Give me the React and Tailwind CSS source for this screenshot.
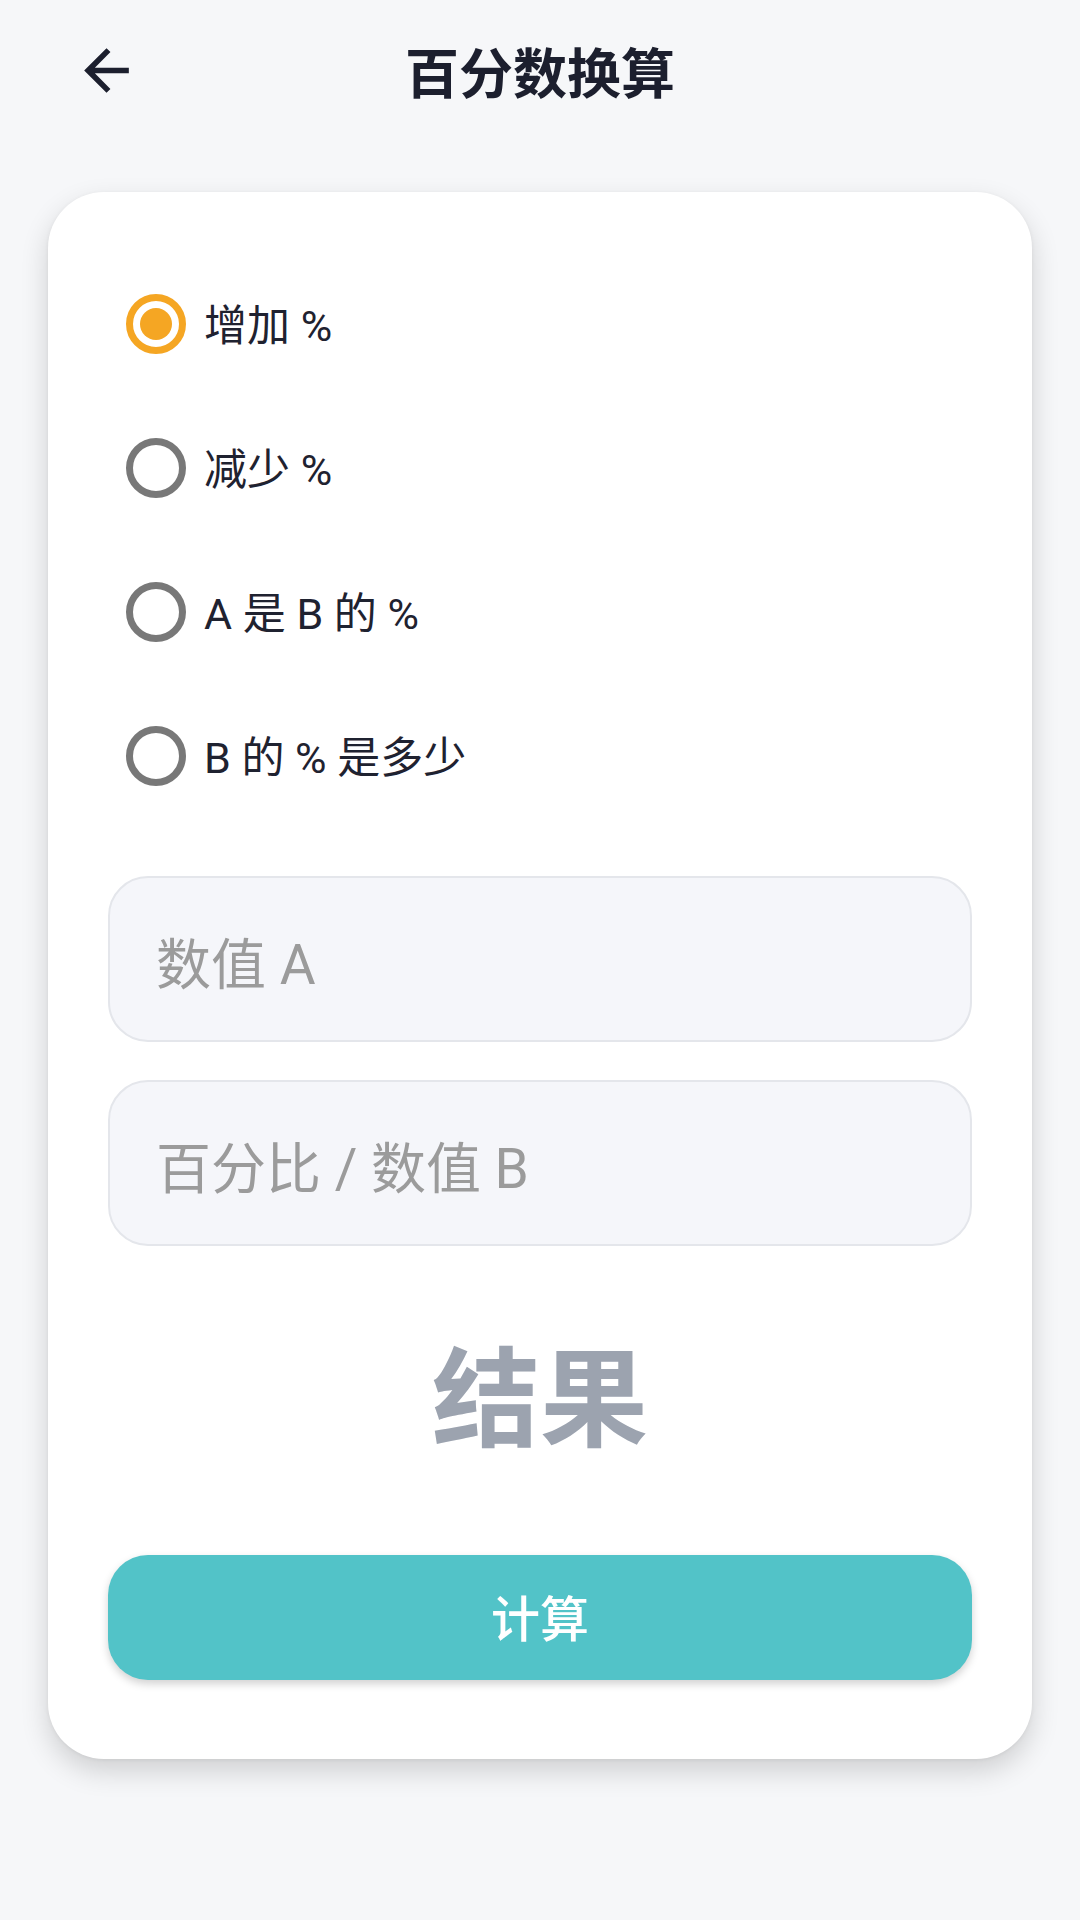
import React from "react";
import { MdArrowBack } from "react-icons/md";

const options = ["增加 %", "减少 %", "A 是 B 的 %", "B 的 % 是多少"];

function Radio({ selected }) {
  return selected ? (
    <div className="w-[60px] h-[60px] rounded-full border-[7px] border-[#f5a623] flex items-center justify-center shrink-0">
      <div className="w-[32px] h-[32px] rounded-full bg-[#f5a623]" />
    </div>
  ) : (
    <div className="w-[60px] h-[60px] rounded-full border-[7px] border-[#787878] shrink-0" />
  );
}

export default function App() {
  return (
    <div
      className="w-[1080px] min-h-[1920px] bg-[#f6f7f9]"
      style={{ fontFamily: 'Roboto, "Noto Sans CJK SC", sans-serif' }}
    >
      <header className="h-[140px] grid grid-cols-[213px_1fr_213px] items-center">
        <div className="flex items-center justify-center">
          <MdArrowBack size={67} color="#1c1f2e" />
        </div>
        <h1 className="pt-[12px] text-center text-[54px] leading-none font-bold text-[#1c1f2e]">
          百分数换算
        </h1>
        <div />
      </header>

      <main className="mx-[48px] mt-[52px] rounded-[56px] bg-white pt-[60px] pb-[79px] shadow-[0_12px_28px_rgba(0,0,0,0.16),0_1px_4px_rgba(0,0,0,0.06)]">
        <div className="flex flex-col">
          {options.map((o, i) => (
            <div key={o} className="h-[144px] flex items-center pl-[78px] gap-[18px]">
              <Radio selected={i === 0} />
              <span className="pt-[5px] text-[43px] leading-none text-[#1f2230]">{o}</span>
            </div>
          ))}
        </div>

        <div className="px-[60px] mt-[48px] flex flex-col gap-[38px]">
          <input
            className="h-[166px] w-full rounded-[40px] border-2 border-[#e4e6eb] bg-[#f5f6fa] pl-[46px] pt-[12px] text-[55px] leading-none text-[#1f2230] placeholder:text-[#9b9b9b] outline-none"
            placeholder="数值 A"
          />
          <input
            className="h-[166px] w-full rounded-[40px] border-2 border-[#e4e6eb] bg-[#f5f6fa] pl-[46px] pt-[12px] text-[55px] leading-none text-[#1f2230] placeholder:text-[#9b9b9b] outline-none"
            placeholder="百分比 / 数值 B"
          />
        </div>

        <div className="mt-[101px] text-center text-[108px] leading-none font-bold text-[#9ca3af]">
          结果
        </div>

        <div className="px-[60px] mt-[100px]">
          <button className="w-full h-[125px] rounded-[40px] bg-[#52c3c8] text-white text-[49px] leading-none font-medium flex items-center justify-center pt-[5px] shadow-[0_4px_8px_rgba(0,0,0,0.18)]">
            计算
          </button>
        </div>
      </main>
    </div>
  );
}
